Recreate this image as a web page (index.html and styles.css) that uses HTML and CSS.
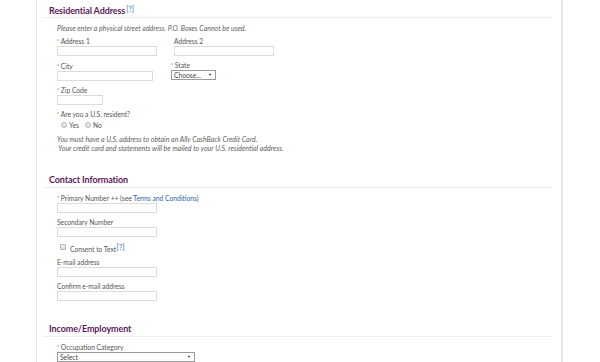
FILE: index.html
```html
<!DOCTYPE html>
<html lang="en">
<head>
  <meta charset="UTF-8">
  <title>Application</title>
  <link rel="stylesheet" href="styles.css">
</head>
<body>

<div class="card">

  <!-- residential address -->
  <h2 class="section-title first">Residential Address<span class="help">[?]</span></h2>
  <p class="note">Please enter a physical street address. P.O. Boxes Cannot be used.</p>

  <div class="row row-1">
    <div class="field col-wide">
      <label><span class="req">*</span> Address 1</label>
      <input type="text" class="input-full">
    </div>
    <div class="field">
      <label>Address 2</label>
      <input type="text" class="input-full">
    </div>
  </div>

  <div class="row row-2">
    <div class="field col-narrow">
      <label><span class="req">*</span> City</label>
      <input type="text" class="input-city">
    </div>
    <div class="field state">
      <label><span class="req">*</span> State</label>
      <div class="select-wrap select-state">
        <select><option>Choose...</option></select>
      </div>
    </div>
  </div>

  <div class="field row-3">
    <label><span class="req">*</span> Zip Code</label>
    <input type="text" class="input-zip">
  </div>

  <div class="field row-4">
    <label><span class="req">*</span> Are you a U.S. resident?</label>
    <div class="radios">
      <span class="radio"><input type="radio" name="res"> Yes</span>
      <span class="radio"><input type="radio" name="res"> No</span>
    </div>
  </div>

  <p class="info">You must have a U.S. address to obtain an Ally CashBack Credit Card.<br>&nbsp;Your credit card and statements will be mailed to your U.S. residential address.</p>

  <!-- contact -->
  <h2 class="section-title">Contact Information</h2>

  <div class="field f-primary">
    <label><span class="req">*</span> Primary Number ++ (see <a href="#">Terms and Conditions</a>)</label>
    <input type="text" class="input-full">
  </div>

  <div class="field f-next">
    <label>Secondary Number</label>
    <input type="text" class="input-full">
  </div>

  <div class="consent">
    <input type="checkbox">
    <span>Consent to Text<span class="help">[?]</span></span>
  </div>

  <div class="field f-email">
    <label>E-mail address</label>
    <input type="text" class="input-full">
  </div>

  <div class="field f-next">
    <label>Confirm e-mail address</label>
    <input type="text" class="input-full">
  </div>

  <!-- income -->
  <h2 class="section-title last">Income/Employment</h2>

  <div class="field f-primary">
    <label><span class="req">*</span> Occupation Category</label>
    <div class="select-wrap select-occupation">
      <select><option>Select</option></select>
    </div>
  </div>

</div>

</body>
</html>
```

FILE: styles.css
```css
body {
  margin: 0;
  background: #fff;
  font-family: Lato, "Open Sans", sans-serif;
  color: #555;
  overflow: hidden;
}

.card {
  margin-left: 36px;
  width: 527px;
  min-height: 362px;
  padding-top: 4px;
  border-left: 1px solid #e8e8e8;
  border-right: 2px solid #e6e6e6;
  box-sizing: border-box;
}

.section-title {
  margin: 21px 9px 0 6px;
  padding: 0 0 1px 6px;
  height: 12px;
  line-height: 12px;
  font-size: 9px;
  font-weight: bold;
  color: #5c1a5b;
  border-bottom: 1px solid #efefef;
  letter-spacing: -0.1px;
}

.section-title.first { margin-top: 0; }
.section-title.last { margin-top: 22px; }

.help {
  font-size: 7.5px;
  font-weight: normal;
  color: #3b78b8;
  vertical-align: 2px;
  margin-left: 1px;
}

.note, .info {
  margin: 6px 0 0 20px;
  font-size: 7px;
  font-style: italic;
  color: #5f5f5f;
  line-height: 8px;
}

.info {
  margin-top: 5px;
  line-height: 9px;
}

.row {
  display: flex;
  padding-left: 20px;
}

.row-1 { margin-top: 5px; }
.row-2 { margin-top: 6px; }
.row-3 { margin-top: 5px; }
.row-4 { margin-top: 5px; }

.field { padding-left: 20px; }
.row .field { padding-left: 0; }

.col-wide { width: 117px; }
.col-narrow { width: 114px; }

label {
  display: block;
  height: 9px;
  line-height: 9px;
  font-size: 6.7px;
  color: #555;
}

.req {
  font-size: 5px;
  vertical-align: 1px;
}

label a {
  color: #2f64a3;
  text-decoration: none;
}

input[type="text"] {
  display: block;
  margin: 0;
  padding: 0;
  height: 10px;
  box-sizing: border-box;
  border: 1px solid #dcdcdc;
  background: #fff;
}

.input-full { width: 100px; }
.input-city { width: 96px; }
.input-zip { width: 46px; }

.state label { margin-top: -1px; }

.select-wrap {
  position: relative;
  height: 10px;
  box-sizing: border-box;
  border: 1px solid #9a9a9a;
  background: #fff;
}

.select-wrap select {
  appearance: none;
  -webkit-appearance: none;
  display: block;
  width: 100%;
  height: 8px;
  margin: 0;
  padding: 0 0 0 2px;
  border: none;
  background: transparent;
  font-family: Lato, sans-serif;
  font-size: 6.7px;
  line-height: 8px;
  color: #444;
}

.select-wrap::after {
  content: "\25BC";
  position: absolute;
  right: 3px;
  top: 2px;
  font-size: 4px;
  line-height: 4px;
  color: #333;
}

.select-state { width: 45px; }
.select-occupation { width: 138px; }

.radios {
  display: flex;
  gap: 6px;
  margin-top: 1px;
  padding-left: 4px;
  height: 10px;
  align-items: center;
  font-size: 6.7px;
}

.radio {
  display: flex;
  align-items: center;
  gap: 2px;
}

input[type="radio"], input[type="checkbox"] {
  appearance: none;
  -webkit-appearance: none;
  margin: 0;
  width: 6px;
  height: 6px;
  border: 1px solid #b5b5b5;
  background: linear-gradient(#f4f4f4, #dcdcdc);
  box-sizing: border-box;
}

input[type="radio"] { border-radius: 50%; }
input[type="checkbox"] { border-radius: 1px; }

.f-primary { margin-top: 6px; }
.f-next { margin-top: 5px; }
.f-email { margin-top: 6px; }

.consent {
  display: flex;
  align-items: center;
  gap: 4px;
  margin-top: 5px;
  padding-left: 23px;
  height: 10px;
  font-size: 6.7px;
}

.consent .help {
  font-size: 8px;
  vertical-align: 2px;
  margin-left: 0;
}
```
